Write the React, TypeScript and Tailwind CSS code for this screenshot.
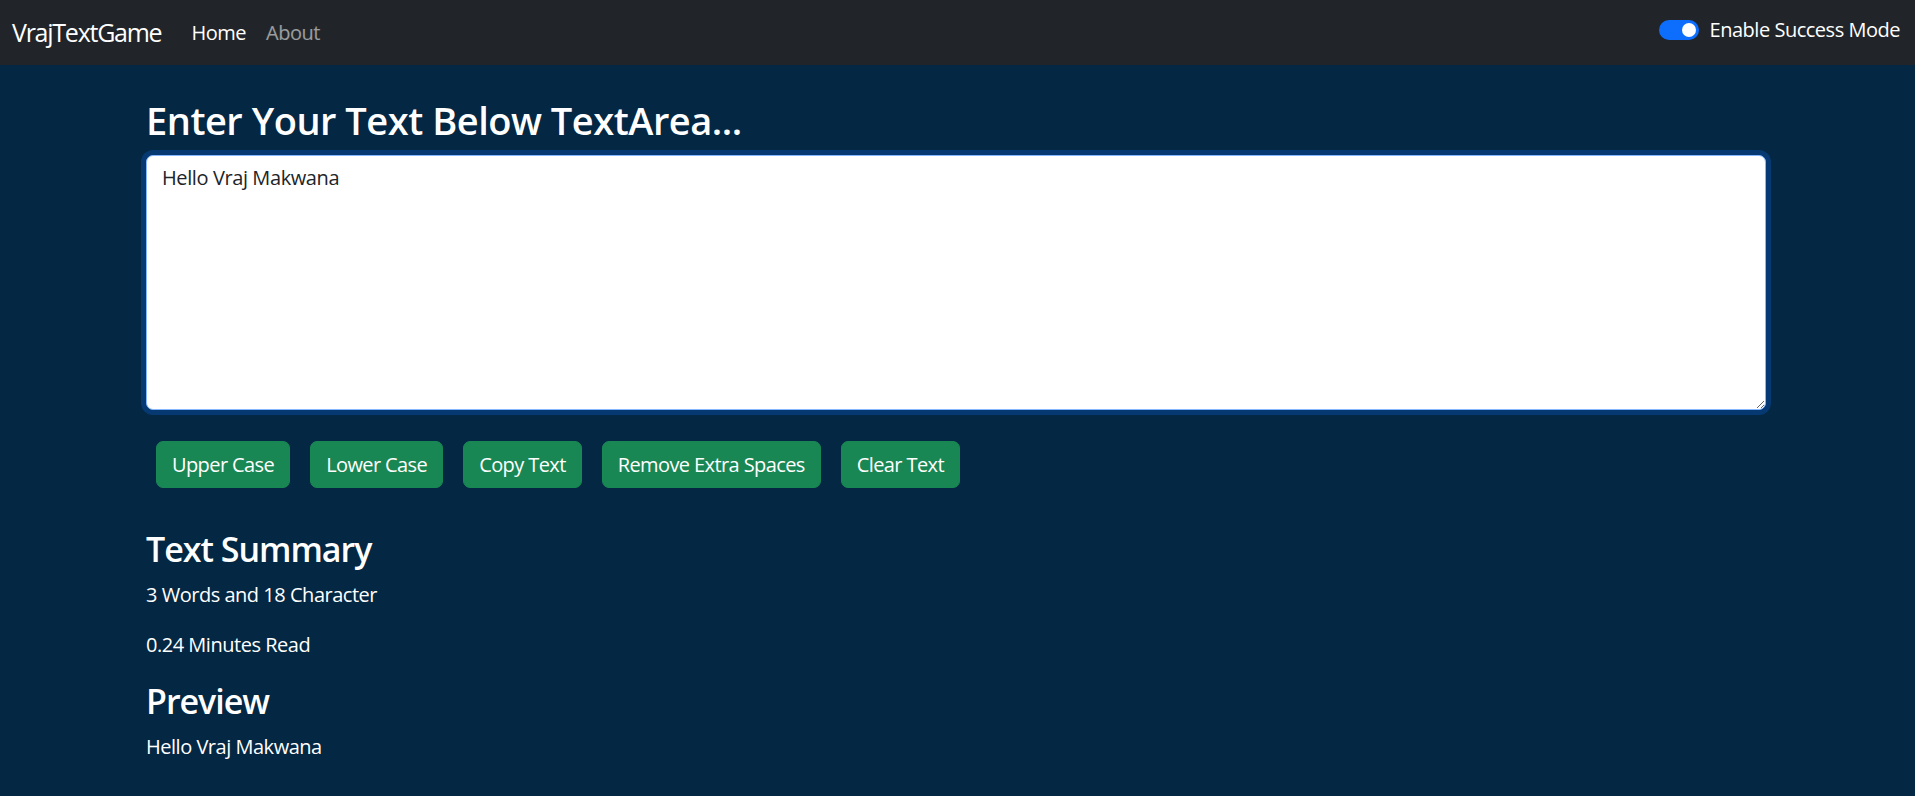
import { useState } from "react";

/*
  VrajTextGame — text utility page.
  Dark navbar on top, a big textarea, a row of green action buttons,
  then a summary (words / characters / read time) and a live preview.
*/

const BUTTONS = ["Upper Case", "Lower Case", "Copy Text", "Remove Extra Spaces", "Clear Text"];

export default function App() {
  const [text, setText] = useState("Hello Vraj Makwana");
  const [success, setSuccess] = useState(true);

  const words = text.split(/\s+/).filter((w) => w.length > 0).length;

  return (
    <div className="min-h-screen bg-[#042743] font-['Open_Sans','Noto_Sans',sans-serif] tracking-[-0.03em] text-white">
      <nav className="flex h-[65px] items-center justify-between bg-[#212529] pl-[12px] pr-[15px]">
        <div className="flex items-center">
          <a href="#" className="mr-[20px] text-[25px] leading-[37px] tracking-[-0.05em] text-white">
            VrajTextGame
          </a>
          <a href="#" className="px-[10px] text-[20px] leading-[30px] text-white">
            Home
          </a>
          <a href="#" className="px-[10px] text-[20px] leading-[30px] text-white/55">
            About
          </a>
        </div>
        <label className="mb-[5px] flex cursor-pointer items-center">
          <button
            type="button"
            onClick={() => setSuccess(!success)}
            className={`flex h-[20px] w-[40px] items-center rounded-full px-[3px] ${
              success ? "justify-end bg-[#0d6efd]" : "justify-start border border-white/25 bg-white"
            }`}
          >
            <span className={`h-[14px] w-[14px] rounded-full ${success ? "bg-white" : "bg-gray-300"}`} />
          </button>
          <span className="ml-[11px] text-[20px] leading-[30px]">Enable Success Mode</span>
        </label>
      </nav>

      <main className="pl-[146px] pr-[149px]">
        <h1 className="mt-[34px] text-[38px] font-semibold leading-[42px]">Enter Your Text Below TextArea...</h1>
        <textarea
          value={text}
          onChange={(e) => setText(e.target.value)}
          className="mt-[14px] block h-[255px] w-full rounded-[7px] border border-[#86b7fe] bg-white py-[7px] pl-[15px] pr-[15px] text-[20px] leading-[30px] tracking-[-0.02em] text-[#212529] shadow-[0_0_0_5px_rgba(13,110,253,0.25)] outline-none"
        />

        <div className="mt-[31px] flex gap-[20px] pl-[10px]">
          {BUTTONS.map((b) => (
            <button
              key={b}
              type="button"
              className="h-[47px] rounded-[7px] border border-[#198754] bg-[#198754] px-[15px] text-[20px] leading-[30px] tracking-[-0.03em] text-white"
            >
              {b}
            </button>
          ))}
        </div>

        <h2 className="mt-[40px] text-[34px] font-semibold leading-[42px] tracking-[-0.03em]">Text Summary</h2>
        <p className="mt-[10px] text-[20px] leading-[30px]">
          {words} Words and {text.length} Character
        </p>
        <p className="mt-[20px] text-[20px] leading-[30px]">{(0.08 * words).toFixed(2)} Minutes Read</p>
        <h2 className="mt-[20px] text-[34px] font-semibold leading-[42px] tracking-[-0.03em]">Preview</h2>
        <p className="mt-[10px] text-[20px] leading-[30px]">{text}</p>
      </main>
    </div>
  );
}
